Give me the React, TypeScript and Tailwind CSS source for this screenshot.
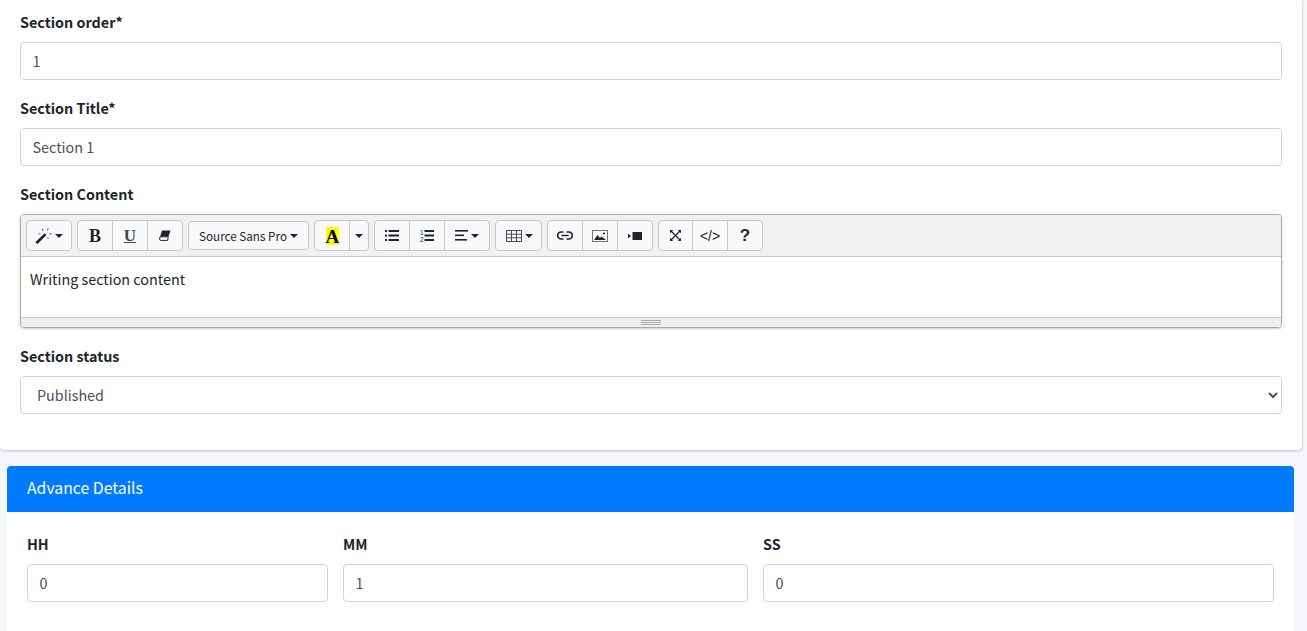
const font = { fontFamily: '"Noto Sans CJK SC", "Open Sans", sans-serif' };
const serif = { fontFamily: '"Liberation Serif", serif' };

const fieldClass =
  "w-full h-[38px] border border-[#ced4da] rounded-[4px] pr-3 pb-[2px] text-[14.35px] leading-6 text-[#495057] bg-white outline-none";
const inputClass = `${fieldClass} pl-[11.5px]`;
const labelClass = "block mb-2 text-[14.35px] leading-6 font-bold";

function Caret() {
  return <span className="ml-[3px] inline-block border-x-[4px] border-t-[4px] border-x-transparent border-t-[#212529]" />;
}

function Btn({ children, className = "" }: { children?: React.ReactNode; className?: string }) {
  return (
    <button
      type="button"
      className={`h-[31px] flex items-center justify-center bg-[#f8f9fa] border border-[#c6c8ca] -ml-px first:ml-0 first:rounded-l-[4px] last:rounded-r-[4px] text-[#212529] ${className}`}
    >
      {children}
    </button>
  );
}

function Group({ children }: { children: React.ReactNode }) {
  return <div className="flex">{children}</div>;
}

export default function App() {
  return (
    <div className="h-[631px] overflow-hidden bg-[#f4f6f9] text-[#212529]" style={font}>
      {/* section form */}
      <div className="w-[1302px] h-[450px] bg-white rounded-b-[4px] shadow-[0_0_1px_rgba(0,0,0,0.13),0_1px_3px_rgba(0,0,0,0.2)] px-5 pt-[10px]">
        <div className="mb-4">
          <label className={labelClass}>Section order*</label>
          <input className={inputClass} defaultValue="1" />
        </div>
        <div className="mb-4">
          <label className={labelClass}>Section Title*</label>
          <input className={inputClass} defaultValue="Section 1" />
        </div>
        <div className="mb-4">
          <label className={labelClass}>Section Content</label>
          <div className="h-[114px] border border-[#a9a9a9] rounded-[4px] shadow-[0_1px_1px_rgba(0,0,0,0.05),0_1px_3px_rgba(0,0,0,0.15)] overflow-hidden">
            {/* toolbar */}
            <div className="h-[42px] bg-[#f0f0f0] border-b border-[#c8c8c8] flex items-start gap-[5px] pl-[5px] pt-[5px]">
              <Group>
                <Btn className="w-[46px]">
                  <svg width="17" height="17" viewBox="0 0 17 17" fill="#212529">
                    <path d="M9.6 6.2l1.9 1.9L3 16.6a.9.9 0 0 1-1.3 0l-.7-.7a.9.9 0 0 1 0-1.3z" />
                    <path d="M7.5 1.5l.9 2.2-.9.4-.9-2.2zM13 1l.8.5-1.2 2-.8-.5zM14.5 6.2l2.2.4-.2 1-2.2-.4zM12.6 10l1.4 1.4-.6.6-1.4-1.4zM3.5 6.2l2 .6-.3.9-2-.6z" fill="#555" />
                  </svg>
                  <Caret />
                </Btn>
              </Group>
              <Group>
                <Btn className="w-[36px]">
                  <span className="text-[18px] font-bold leading-none" style={serif}>B</span>
                </Btn>
                <Btn className="w-[36px]">
                  <span className="text-[17px] font-bold underline leading-none text-[#3f4750]" style={serif}>U</span>
                </Btn>
                <Btn className="w-[36px]">
                  <svg width="12" height="11" viewBox="0 0 12 11">
                    <path d="M3 0.5h8.5L9.5 6.5H1.2z" fill="#212529" />
                    <path d="M1 6.8h8.2L8.7 10.4H1.3L0.6 9z" fill="none" stroke="#212529" />
                  </svg>
                </Btn>
              </Group>
              <Group>
                <Btn className="w-[121px] !h-[29px] mt-px text-[11.7px]">
                  Source Sans Pro
                  <Caret />
                </Btn>
              </Group>
              <Group>
                <Btn className="w-[36px]">
                  <span
                    className="block w-[13px] h-[18px] bg-[#ffff00] text-black text-[19px] leading-[20px] font-bold text-center"
                    style={serif}
                  >
                    A
                  </span>
                </Btn>
                <Btn className="w-[20px]">
                  <span className="flex -ml-[3px]"><Caret /></span>
                </Btn>
              </Group>
              <Group>
                <Btn className="w-[36px]">
                  <svg width="14" height="11" viewBox="0 0 14 11" fill="#212529">
                    <rect x="0" y="0" width="2" height="2" />
                    <rect x="0" y="4.5" width="2" height="2" />
                    <rect x="0" y="9" width="2" height="2" />
                    <rect x="3.5" y="0" width="10.5" height="2" />
                    <rect x="3.5" y="4.5" width="10.5" height="2" />
                    <rect x="3.5" y="9" width="10.5" height="2" />
                  </svg>
                </Btn>
                <Btn className="w-[36px]">
                  <svg width="14" height="13" viewBox="0 0 14 13" fill="#212529">
                    <text x="0" y="5.5" fontSize="6.5" fontFamily="Liberation Sans">1</text>
                    <text x="0" y="13" fontSize="6.5" fontFamily="Liberation Sans">2</text>
                    <rect x="4.5" y="1" width="9.5" height="2" />
                    <rect x="4.5" y="5.5" width="9.5" height="2" />
                    <rect x="4.5" y="10" width="9.5" height="2" />
                  </svg>
                </Btn>
                <Btn className="w-[46px]">
                  <svg width="13" height="11" viewBox="0 0 13 11" fill="#212529">
                    <rect y="0" width="13" height="1.6" />
                    <rect y="4.5" width="9" height="1.6" />
                    <rect y="9" width="12" height="1.6" />
                  </svg>
                  <Caret />
                </Btn>
              </Group>
              <Group>
                <Btn className="w-[47px]">
                  <svg className="ml-px" width="16" height="12" viewBox="0 0 16 12" fill="none" stroke="#4a4a55">
                    <path d="M.5.5h15v11H.5zM.5 4.2h15M.5 7.8h15M5.5.5v11M10.5.5v11" />
                  </svg>
                  <Caret />
                </Btn>
              </Group>
              <Group>
                <Btn className="w-[36px]">
                  <svg width="16" height="9" viewBox="0 0 16 9" fill="none" stroke="#212529" strokeWidth="1.7">
                    <path d="M6.5 1H4.2a3.4 3.4 0 0 0 0 7h2.3M9.5 1h2.3a3.4 3.4 0 0 1 0 7H9.5M4.5 4.5h7" />
                  </svg>
                </Btn>
                <Btn className="w-[36px]">
                  <svg width="16" height="12" viewBox="0 0 16 12">
                    <rect x=".5" y=".5" width="15" height="11" fill="none" stroke="#777" />
                    <path d="M2 10l3.5-5 2.5 3 1.5-1.5L14 10z" fill="#212529" />
                    <circle cx="12" cy="3.5" r="1.1" fill="#212529" />
                  </svg>
                </Btn>
                <Btn className="w-[36px]">
                  <svg width="14" height="8" viewBox="0 0 14 8" fill="#212529">
                    <rect x="4.5" y="0" width="9.5" height="8" />
                    <path d="M0 1.7L3.2 4 0 6.3z" />
                  </svg>
                </Btn>
              </Group>
              <Group>
                <Btn className="w-[35px]">
                  <svg width="11" height="11" viewBox="0 0 11 11" fill="none" stroke="#212529" strokeWidth="1.3">
                    <path d="M1 1l9 9M10 1l-9 9" />
                    <path d="M0 0h3.2L0 3.2zM11 0H7.8L11 3.2zM0 11h3.2L0 7.8zM11 11H7.8L11 7.8z" fill="#212529" stroke="none" />
                  </svg>
                </Btn>
                <Btn className="w-[36px]">
                  <span className="text-[14px] leading-none" style={{ fontFamily: '"Liberation Sans", sans-serif' }}>&lt;/&gt;</span>
                </Btn>
                <Btn className="w-[36px]">
                  <span className="text-[17px] font-bold leading-none" style={{ fontFamily: '"Liberation Sans", sans-serif' }}>?</span>
                </Btn>
              </Group>
            </div>
            {/* editing area */}
            <div className="h-[61px] bg-white border-b border-[#c8c8c8] px-[9px] pt-[10px] text-[14.35px] leading-6">
              Writing section content
            </div>
            {/* resize bar */}
            <div className="h-[9px] bg-[#f0f0f0] flex flex-col items-center justify-center gap-px">
              <span className="w-5 h-px bg-[#a9a9a9]" />
              <span className="w-5 h-px bg-[#a9a9a9]" />
              <span className="w-5 h-px bg-[#a9a9a9]" />
            </div>
          </div>
        </div>
        <div>
          <label className={labelClass}>Section status</label>
          <select className={`${fieldClass} pl-3`} defaultValue="Published">
            <option>Published</option>
          </select>
        </div>
      </div>

      {/* advance details */}
      <div className="w-[1287px] ml-[7px] mt-4 bg-white rounded-t-[4px] overflow-hidden h-[400px]">
        <div className="h-[46px] bg-[#007bff] text-white text-[15.8px] leading-[44px] px-5">Advance Details</div>
        <div className="flex gap-[15px] px-5 pt-5">
          <div className="w-[301px]">
            <label className={labelClass}>HH</label>
            <input className={inputClass} defaultValue="0" />
          </div>
          <div className="w-[405px]">
            <label className={labelClass}>MM</label>
            <input className={inputClass} defaultValue="1" />
          </div>
          <div className="flex-1">
            <label className={labelClass}>SS</label>
            <input className={inputClass} defaultValue="0" />
          </div>
        </div>
      </div>
    </div>
  );
}
